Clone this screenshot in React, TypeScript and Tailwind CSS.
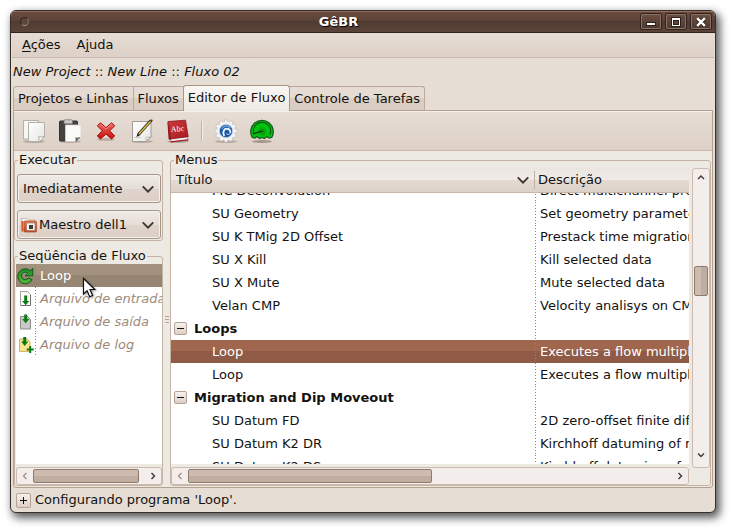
import React from 'react';

type Item = { title: string; description?: string; group?: boolean; selected?: boolean };

const MENU_ITEMS: Item[] = [
  { title: 'MC Deconvolution', description: 'Direct multichannel predictive' },
  { title: 'SU Geometry', description: 'Set geometry parameters' },
  { title: 'SU K TMig 2D Offset', description: 'Prestack time migration' },
  { title: 'SU X Kill', description: 'Kill selected data' },
  { title: 'SU X Mute', description: 'Mute selected data' },
  { title: 'Velan CMP', description: 'Velocity analisys on CMP' },
  { title: 'Loops', group: true },
  { title: 'Loop', description: 'Executes a flow multiple times', selected: true },
  { title: 'Loop', description: 'Executes a flow multiple times' },
  { title: 'Migration and Dip Moveout', group: true },
  { title: 'SU Datum FD', description: '2D zero-offset finite difference' },
  { title: 'SU Datum K2 DR', description: 'Kirchhoff datuming of receivers' },
  { title: 'SU Datum K2 DS', description: 'Kirchhoff datuming of sources' },
];

const DOTS =
  '[background:repeating-linear-gradient(#8b8681_0_1px,transparent_1px_3px)_left/1px_100%_no-repeat]';

function Chevron({ dir, size = 8, color = '#3c3733' }: { dir: 'up' | 'down' | 'left' | 'right'; size?: number; color?: string }) {
  const d = {
    up: 'M1 6 4 3 7 6',
    down: 'M1 2.5 4 5.5 7 2.5',
    left: 'M5.5 1 2.5 4 5.5 7',
    right: 'M2.5 1 5.5 4 2.5 7',
  }[dir];
  return (
    <svg width={size} height={size} viewBox="0 0 8 8" fill="none" stroke={color} strokeWidth={size > 8 ? 1.1 : 1.4} aria-hidden="true">
      <path d={d} />
    </svg>
  );
}

function PageFold() {
  return (
    <g>
      <path d="M6.500 3.500h16v14l-5 5H6.500z" fill="url(#paper)" stroke="#b3b0ac" />
      <path d="M16.500 22.500c.7-1.500.7-3.200.2-4.800 1.700.5 3.800.3 5.800-.7l-.2.700-4.800 4.800z" fill="#fff" stroke="#9c9995" strokeWidth=".8" />
    </g>
  );
}

function Defs() {
  return (
    <svg width="0" height="0" className="absolute" aria-hidden="true">
      <defs>
        <linearGradient id="paper" x1="0" y1="0" x2="1" y2="1">
          <stop offset="0" stopColor="#ffffff" />
          <stop offset="1" stopColor="#e6e6e4" />
        </linearGradient>
        <linearGradient id="red" x1="0" y1="0" x2="0" y2="1">
          <stop offset="0" stopColor="#f46a62" />
          <stop offset="1" stopColor="#c50d0d" />
        </linearGradient>
        <linearGradient id="book" x1="0" y1="0" x2="1" y2="1">
          <stop offset="0" stopColor="#d0383c" />
          <stop offset="1" stopColor="#a51c22" />
        </linearGradient>
        <linearGradient id="orange" x1="0" y1="0" x2="0" y2="1">
          <stop offset="0" stopColor="#e2805a" />
          <stop offset="1" stopColor="#c3401c" />
        </linearGradient>
        <radialGradient id="green">
          <stop offset="0" stopColor="#068a06" />
          <stop offset="1" stopColor="#00c410" />
        </radialGradient>
        <linearGradient id="leaf" x1="0" y1="0" x2="0" y2="1">
          <stop offset="0" stopColor="#1c8a24" />
          <stop offset="1" stopColor="#55b83c" />
        </linearGradient>
      </defs>
    </svg>
  );
}

function Shadow() {
  return <ellipse cx="12" cy="22.600" rx="11" ry="1.400" fill="#6b5a4c" opacity=".35" />;
}

function CopyIcon() {
  return (
    <svg width="24" height="24" viewBox="0 0 24 24">
      <Shadow />
      <path d="M1.500 1.500h15v18.500h-15z" fill="#f7f7f6" stroke="#b3b0ac" />
      <PageFold />
    </svg>
  );
}

function PasteIcon() {
  return (
    <svg width="24" height="24" viewBox="0 0 24 24">
      <Shadow />
      <rect x="1.500" y="2" width="18" height="20" rx="1" fill="#45423f" stroke="#353230" />
      <rect x="6" y=".8" width="8.500" height="4" rx="1" fill="#c9cac7" stroke="#7d7c79" strokeWidth=".8" />
      <path d="M7.500 6h15.500v12l-5 4.500H7.500z" fill="#fbfbfa" stroke="#d6d4d1" strokeWidth=".8" />
      <path d="M17.500 22.500c.6-1.300.5-2.500.2-3.700 1.300.3 2.900.2 4.200-.2z" fill="#666" stroke="#555" strokeWidth=".6" />
    </svg>
  );
}

function DeleteIcon() {
  return (
    <svg width="24" height="24" viewBox="0 0 24 24">
      <ellipse cx="12" cy="20.500" rx="9" ry="1.500" fill="#6b5a4c" opacity=".3" />
      <path
        d="M6.500 3.800 12 8.700l5.500-4.900 3.200 3-5 5 5 5.200-3.200 3-5.500-5-5.500 5-3.200-3 5-5.200-5-5z"
        fill="url(#red)"
        stroke="#a50d0d"
        strokeLinejoin="round"
      />
      <path d="M6.500 5.200 12 10l5.500-4.800" fill="none" stroke="#ff9d94" strokeWidth=".8" />
    </svg>
  );
}

function EditIcon() {
  return (
    <svg width="24" height="24" viewBox="0 0 24 24">
      <Shadow />
      <path d="M2.500 2.500h18.500v15.500l-4.500 4.500h-14z" fill="url(#paper)" stroke="#a09d99" />
      <path d="M16 22.500c.6-1.500.5-3 .2-4.300 1.500.4 3 .2 4.500-.7z" fill="#fff" stroke="#a9a6a2" strokeWidth=".8" />
      <path d="M4 18.500h7" stroke="#c9c7c4" />
      <path d="M21 1.500 8.500 15.500" stroke="#29241a" strokeWidth="3" />
      <path d="M20.500 2.200 9 15" stroke="#e3c64a" strokeWidth="1.400" />
      <path d="m6.500 18 .9-3.500 2.300 1.900z" fill="#222" />
      <path d="m20 1.300 1.800 1.600 1-1.700-1-1z" fill="#7b2c2c" />
    </svg>
  );
}

function BookIcon() {
  return (
    <svg width="24" height="24" viewBox="0 0 24 24">
      <Shadow />
      <path d="m4 19 17-1.500 1 3.500-16.500 2z" fill="#f4f2f0" stroke="#8f8a87" strokeWidth=".7" />
      <path d="m2 2.500 3 18c-1.500.5-2.300 0-2.500-1.300L1.500 4z" fill="#8c161b" />
      <path d="m2 2.500 17.500-1.300 2.700 16.500L4.600 20z" fill="url(#book)" stroke="#8c161b" strokeWidth=".8" />
      <path d="m4.500 22.800 17.700-2" stroke="#9a1a20" strokeWidth="1.200" />
      <text x="5" y="12.500" fontSize="8" fill="#fff" transform="rotate(-4 12 12)" className="[font-family:'Liberation_Serif',serif]">
        Abc
      </text>
    </svg>
  );
}

function GearIcon() {
  const teeth = Array.from({ length: 12 }, (_, i) => i * 30);
  return (
    <svg width="24" height="24" viewBox="0 0 24 24">
      <Shadow />
      {teeth.map((a) => (
        <rect key={a} x="10.300" y=".8" width="3.400" height="4" rx="1" fill="#f6f6f4" stroke="#b5b3af" strokeWidth=".6" transform={`rotate(${a} 12 12)`} />
      ))}
      <circle cx="12" cy="12" r="9.200" fill="#f3f3f1" />
      <circle cx="12" cy="12" r="6.600" fill="#1857a6" stroke="#c3cfdc" strokeWidth=".8" />
      <path d="M7.800 9.800C9.500 6.500 14 6 16 8.800" fill="none" stroke="#6ba6e2" strokeWidth="1.400" />
      <path d="M10 16.300C8.300 12.500 10.300 9.600 13 9.800c2.200.1 3.500 1.500 3.300 3.300" fill="none" stroke="#eaf3fb" strokeWidth="1.900" strokeLinecap="round" />
      <path d="M12.800 14.800c.6 1 2.300.9 3.200-.3" fill="none" stroke="#9cc6ee" strokeWidth="1.100" strokeLinecap="round" />
    </svg>
  );
}

function GaugeIcon() {
  return (
    <svg width="24" height="24" viewBox="0 0 24 24">
      <ellipse cx="12" cy="22.500" rx="10" ry="1.500" fill="#4b3a2c" opacity=".4" />
      <path
        d="M2.300 18.500A11.300 11.300 0 1 1 21.700 18.500l-2.700.6-2-1.600-2.500 2-2.500-1-2.500 1-2.500-2-2 1.600z"
        fill="#00c410"
        stroke="#1c5c1c"
        strokeWidth="1.300"
      />
      <circle cx="12" cy="12.500" r="5.500" fill="url(#green)" />
      <path d="M4.200 15.500A8.600 8.600 0 1 1 19.800 15.500" fill="none" stroke="#0a5c10" strokeWidth="1.200" />
      <path d="M3 14.800 12.500 12" stroke="#0b300b" strokeWidth="1.300" />
    </svg>
  );
}

function LoopIcon() {
  return (
    <svg width="18" height="18" viewBox="0 0 18 18" className="shrink-0">
      <path
        d="M16 12.600A7.500 7.500 0 1 1 14.200 3.700L16.800 1.300V8.800H9.200l2.500-2.600A3.700 3.700 0 1 0 12.200 11z"
        fill="url(#leaf)"
        stroke="#0d5c16"
        strokeWidth="1"
        strokeLinejoin="round"
      />
    </svg>
  );
}

function InputIcon() {
  return (
    <svg width="18" height="18" viewBox="0 0 18 18" className="shrink-0">
      <path d="M4.500 1.500h7l3 3v11h-10z" fill="#fdfdfc" stroke="#a3a19e" />
      <path d="M14.500 5v10.500H5" fill="none" stroke="#6e6c69" />
      <path d="M8.200 5.500h3V11h2.100l-3.600 4.300L6.100 11h2.100z" fill="#0a7d12" />
    </svg>
  );
}

function OutputIcon() {
  return (
    <svg width="18" height="18" viewBox="0 0 18 18" className="shrink-0">
      <path d="M4.500 3.500h7l3 3v9.500h-10z" fill="#c9c9c7" stroke="#8f8d8a" />
      <path d="M8.200 1.500h3V6h2.100L9.700 10.300 6.100 6h2.100z" fill="#0a7d12" />
    </svg>
  );
}

function LogIcon() {
  return (
    <svg width="18" height="18" viewBox="0 0 18 18" className="shrink-0">
      <path d="M3.500 3h8l2.500 3v9.500H3.500z" fill="#f9e28f" stroke="#d3b765" />
      <path d="M7.200 1h3v4.500h2.100L8.700 10 5.100 5.500h2.100z" fill="#0a7d12" />
      <path d="M14.200 10v7M10.700 13.500h7" stroke="#0a7d12" strokeWidth="2" />
    </svg>
  );
}

function ServerIcon() {
  return (
    <svg width="16" height="16" viewBox="0 0 16 16">
      <path d="M.5 1.500h5.500l1.500 1.500h6v9.500H.5z" fill="#fbf8f6" stroke="#c9b8ad" />
      <path d="M.5 4h2v10.500h-2z" fill="#d85a2e" />
      <rect x="3" y="4" width="12.500" height="11" rx="1" fill="url(#orange)" stroke="#b3502f" strokeWidth=".8" />
      <rect x="5.500" y="6" width="8.500" height="7.500" fill="#f4f2f0" stroke="#9c6a58" strokeWidth=".6" />
      <rect x="8" y="8" width="4" height="4" fill="#3c3a38" />
    </svg>
  );
}

const TOOLS = [
  { label: 'Copiar', icon: <CopyIcon /> },
  { label: 'Colar', icon: <PasteIcon /> },
  { label: 'Excluir', icon: <DeleteIcon /> },
  { label: 'Editar', icon: <EditIcon /> },
  { label: 'Ajuda', icon: <BookIcon /> },
];

function ToolButton({ label, children }: { label: string; children: React.ReactNode }) {
  return (
    <button aria-label={label} className="flex w-9 items-center justify-center">
      {children}
    </button>
  );
}

function TitleButton({ label, children }: { label: string; children: React.ReactNode }) {
  return (
    <button
      aria-label={label}
      className="flex h-[17px] w-[22px] items-center justify-center rounded-[2px] border border-[#30211b] bg-gradient-to-b from-[#6d4e42] to-[#4c3930] shadow-[inset_0_0_0_1px_#8a7268]"
    >
      <svg width="10" height="10" viewBox="0 0 10 10" aria-hidden="true">
        {children}
      </svg>
    </button>
  );
}

const THUMB_X = 'h-[14px] rounded-[2px] border border-[#8f7b6d] bg-[linear-gradient(#cdbbb0_0_50%,#bfada0_50%_100%)]';
const BAR = 'rounded-[3px] border border-[#cdbcae] bg-[#f3eeeb]';

function HorizontalBar({ thumb, rest }: { thumb: number; rest: number }) {
  return (
    <div className={`mt-[3px] flex h-[18px] shrink-0 items-center ${BAR}`}>
      <button aria-label="Rolar para a esquerda" className="flex w-4 justify-center">
        <Chevron dir="left" color="#a3958a" />
      </button>
      <div className={THUMB_X} style={{ flex: `${thumb} 1 0` }} />
      <div style={{ flex: `${rest} 1 0` }} />
      <button aria-label="Rolar para a direita" className="flex w-4 justify-center">
        <Chevron dir="right" />
      </button>
    </div>
  );
}

function Combo({ label, value, icon }: { label: string; value: string; icon?: React.ReactNode }) {
  return (
    <div className="relative flex h-[29px] items-center">
      <select
        aria-label={label}
        className={`size-full appearance-none rounded-[3px] border border-[#a89688] bg-[linear-gradient(#f0ebe7_0,#e5ddd6_50%,#dfd4cc_50%,#dccfc6_100%)] text-[13px] shadow-[inset_0_0_0_1px_#f6f1ed] ${icon ? 'pl-[21px]' : 'pl-[5px]'}`}
      >
        <option>{value}</option>
      </select>
      {icon && <span className="pointer-events-none absolute left-1">{icon}</span>}
      <span className="pointer-events-none absolute right-[6px]">
        <Chevron dir="down" size={14} />
      </span>
    </div>
  );
}

function Expander({ sign, size }: { sign: 'minus' | 'plus'; size: string }) {
  return (
    <button
      aria-label={sign === 'minus' ? 'Recolher' : 'Expandir'}
      className={`flex shrink-0 items-center justify-center rounded-[2px] border border-[#b7a294] bg-gradient-to-b from-[#f5f1ee] to-[#dccfc6] ${size}`}
    >
      <svg width="7" height="7" viewBox="0 0 7 7" stroke="#111" aria-hidden="true">
        <path d={sign === 'minus' ? 'M0 3.500h7' : 'M0 3.500h7M3.500 0v7'} />
      </svg>
    </button>
  );
}

function MenuTable() {
  return (
    <div className="min-h-0 flex-1 overflow-hidden bg-white">
      <table aria-label="Menus" className="-mt-[14px] w-full table-fixed border-collapse">
        <colgroup>
          <col className="w-[364px]" />
          <col />
        </colgroup>
        <tbody>
          {MENU_ITEMS.map((item, i) => (
            <tr
              key={i}
              className={item.selected ? 'h-[23px] bg-[linear-gradient(#a0664e_0_50%,#8f5b47_50%_100%)] text-white' : 'h-[23px]'}
            >
              <td className={item.group ? 'pl-[3px] font-bold' : 'pl-[41px]'}>
                {item.group ? (
                  <div className="flex items-center gap-[7px]">
                    <Expander sign="minus" size="size-[13px]" />
                    {item.title}
                  </div>
                ) : (
                  item.title
                )}
              </td>
              <td className={`overflow-hidden pl-[5px] whitespace-nowrap ${DOTS}`}>{item.description}</td>
            </tr>
          ))}
        </tbody>
      </table>
    </div>
  );
}

const FLOW = [
  { name: 'Loop', icon: <LoopIcon /> },
  { name: 'Arquivo de entrada', icon: <InputIcon /> },
  { name: 'Arquivo de saída', icon: <OutputIcon /> },
  { name: 'Arquivo de log', icon: <LogIcon /> },
];

const FIELDSET = 'min-w-0 rounded-[3px] border border-[#c5b3a6]';
const LEGEND = 'ml-[3px] h-4 px-px leading-4';

export default function App() {
  return (
    <div className="flex h-screen bg-white pt-[10px] pr-[17px] pb-[17px] pl-[10px] text-[13px] leading-4 text-[#141210] [font-family:'DejaVu_Sans',sans-serif]">
      <Defs />
      <div className="flex min-w-0 flex-1 flex-col overflow-hidden rounded-[6px] border border-[#3a302a] bg-[#e6ddd4] shadow-[3px_4px_9px_1px_rgba(0,0,0,0.65)]">
        <header className="flex h-[22px] shrink-0 items-center border-b border-[#30231d] bg-[linear-gradient(#8d6c5e_0_1px,#6c4b3f_1px,#594137_50%,#4e3b32_50%,#5b443a_100%)] pr-[3px]">
          <span className="w-[26px] pl-[9px]">
            <span className="block size-[9px] rounded-full border border-[#2f221c] border-r-[#8a7268] border-b-[#a08a7e] bg-[#5e463b]" />
          </span>
          <h1 className="flex-1 text-center font-bold text-white [text-shadow:1px_1px_1px_#000]">GêBR</h1>
          <div className="flex gap-[3px]">
            <TitleButton label="Minimizar">
              <path d="M0 5h10v4H0z" fill="#30211b" />
              <path d="M1 6h8v2H1z" fill="#fff" />
            </TitleButton>
            <TitleButton label="Maximizar">
              <path d="M0 0h10v10H0z" fill="#30211b" />
              <path d="M1 1h8v8H1zM2 3v5h6V3z" fill="#fff" fillRule="evenodd" />
              <path d="M3 4h4v3H3z" fill="#5b443a" />
            </TitleButton>
            <TitleButton label="Fechar">
              <path d="m1.500 1.500 7 7m0-7-7 7" stroke="#30211b" strokeWidth="4" />
              <path d="m1.200 1.200 7.600 7.600m0-7.600-7.600 7.600" stroke="#fff" strokeWidth="2.400" />
            </TitleButton>
          </div>
        </header>

        <nav className="mx-px flex h-[25px] shrink-0 items-center gap-4 border-b border-[#c9b7aa] bg-gradient-to-b from-[#e6dcd4] to-[#ddd0c6] pl-[10px]">
          <button>
            <span className="underline underline-offset-2">A</span>ções
          </button>
          <button>
            A<span className="underline underline-offset-2">j</span>uda
          </button>
        </nav>

        <p className="flex h-[27px] shrink-0 items-center pl-[2px] italic">
          <span>
            New Project <span className="not-italic">::</span> New Line <span className="not-italic">::</span> Fluxo 02
          </span>
        </p>

        <div role="tablist" className="ml-[2px] flex h-[25px] shrink-0 items-end">
          <button role="tab" className="h-[24px] rounded-tl-[3px] border border-b-0 border-[#bda999] bg-[linear-gradient(#e6dcd4_0_50%,#dacdc2_50%_100%)] pr-[5px] pl-1">
            Projetos e Linhas
          </button>
          <button role="tab" className="h-[24px] border-t border-[#bda999] bg-[linear-gradient(#e6dcd4_0_50%,#dacdc2_50%_100%)] pr-1 pl-[3px]">
            Fluxos
          </button>
          <button role="tab" aria-selected="true" className="z-10 -mb-px h-[26px] rounded-t-[3px] border border-b-0 border-[#a99582] bg-gradient-to-b from-[#f9f6f4] to-[#ede9e3] px-1 pb-[2px]">
            Editor de Fluxo
          </button>
          <button role="tab" className="h-[24px] rounded-tr-[3px] border border-b-0 border-l-0 border-[#bda999] bg-[linear-gradient(#e6dcd4_0_50%,#dacdc2_50%_100%)] px-1">
            Controle de Tarefas
          </button>
        </div>

        <main className="mr-[2px] ml-[2px] flex min-h-0 flex-1 flex-col rounded-b-[3px] border border-[#b3a08f] bg-[#ede9e3]">
          <div className="flex h-10 shrink-0 items-center border-t border-b border-t-[#f6f1ed] border-b-[#c9b7aa] bg-gradient-to-b from-[#e6ddd4] to-[#ddd0c7] pl-[2px]">
            {TOOLS.map((t) => (
              <ToolButton key={t.label} label={t.label}>
                {t.icon}
              </ToolButton>
            ))}
            <span className="mx-[5px] h-5 w-[2px] border-r border-l border-r-[#f4eeea] border-l-[#c3b0a2]" />
            <ToolButton label="Executar">
              <GearIcon />
            </ToolButton>
            <ToolButton label="Monitor">
              <GaugeIcon />
            </ToolButton>
          </div>

          <div className="flex min-h-0 flex-1 py-px pr-px">
            <section className="flex w-[149px] shrink-0 flex-col gap-[7px]">
              <fieldset className={`shrink-0 ${FIELDSET}`}>
                <legend className={LEGEND}>Executar</legend>
                <div className="flex flex-col gap-[7px] pt-[6px] pr-px pb-px pl-[2px]">
                  <Combo label="Quando" value="Imediatamente" />
                  <Combo label="Servidor" value="Maestro dell1" icon={<ServerIcon />} />
                </div>
              </fieldset>
              <fieldset className={`flex min-h-0 flex-1 flex-col ${FIELDSET}`}>
                <legend className={`whitespace-nowrap ${LEGEND}`}>Seqüência de Fluxo</legend>
                <div className="relative ml-px min-h-0 flex-1 bg-white">
                  <ul className="overflow-hidden">
                    {FLOW.map((f, i) => (
                      <li
                        key={f.name}
                        className={`flex h-[23px] items-center gap-px whitespace-nowrap ${i === 0 ? 'bg-[linear-gradient(#a3917f_0_50%,#978573_50%_100%)] text-white' : 'text-[#9c8b7b] italic'}`}
                      >
                        {f.icon}
                        <span className={`flex h-full items-center pl-[5px] ${DOTS}`}>{f.name}</span>
                      </li>
                    ))}
                  </ul>
                  <svg width="16" height="24" viewBox="0 0 16 24" className="absolute top-[13px] left-[66px] drop-shadow-[1px_1px_1px_rgba(0,0,0,0.4)]" aria-hidden="true">
                    <path d="M1.500 1.500v15.500l3.600-3.300 2.600 6 2.900-1.200-2.600-6h4.800z" fill="#fff" stroke="#111" strokeWidth="1.200" />
                  </svg>
                </div>
                <div className="ml-px">
                  <HorizontalBar thumb={108} rest={6} />
                </div>
              </fieldset>
            </section>

            <div className="flex w-[7px] shrink-0 flex-col items-center justify-center gap-[2px]">
              <span className="h-px w-1 bg-[#b7a698]" />
              <span className="h-px w-1 bg-[#b7a698]" />
              <span className="h-px w-1 bg-[#b7a698]" />
            </div>

            <fieldset className={`flex flex-1 flex-col ${FIELDSET}`}>
              <legend className={LEGEND}>Menus</legend>
              <div className="flex min-h-0 flex-1 gap-[3px]">
                <div className="flex min-w-0 flex-1 flex-col">
                  <div className="flex h-[25px] shrink-0 border-b border-[#c9b4a7] bg-[linear-gradient(#ebe5e0_0,#f0ebe7_50%,#e3dad3_50%,#ddd1c8_100%)]">
                    <button className="flex w-[363px] items-center justify-between pr-[4px] pl-[5px]">
                      Título
                      <Chevron dir="down" size={14} />
                    </button>
                    <button className="my-[3px] flex min-w-0 flex-1 items-center border-l border-[#c3b0a2] pl-[3px]">Descrição</button>
                  </div>
                  <MenuTable />
                  <HorizontalBar thumb={243} rest={242} />
                </div>
                <div className={`mb-[17px] flex w-[18px] shrink-0 flex-col items-center ${BAR}`}>
                  <button aria-label="Rolar para cima" className="flex h-4 items-center">
                    <Chevron dir="up" />
                  </button>
                  <div className="flex-[81]" />
                  <div className="h-[30px] w-[14px] rounded-[2px] border border-[#8f7b6d] bg-[linear-gradient(90deg,#cdbbb0_0_50%,#bfada0_50%_100%)]" />
                  <div className="flex-[147]" />
                  <button aria-label="Rolar para baixo" className="flex h-6 items-center">
                    <Chevron dir="down" />
                  </button>
                </div>
              </div>
            </fieldset>
          </div>
        </main>

        <footer className="flex h-6 shrink-0 items-center gap-1 pl-[5px]">
          <Expander sign="plus" size="size-[15px]" />
          <p>Configurando programa 'Loop'.</p>
        </footer>
      </div>
    </div>
  );
}
